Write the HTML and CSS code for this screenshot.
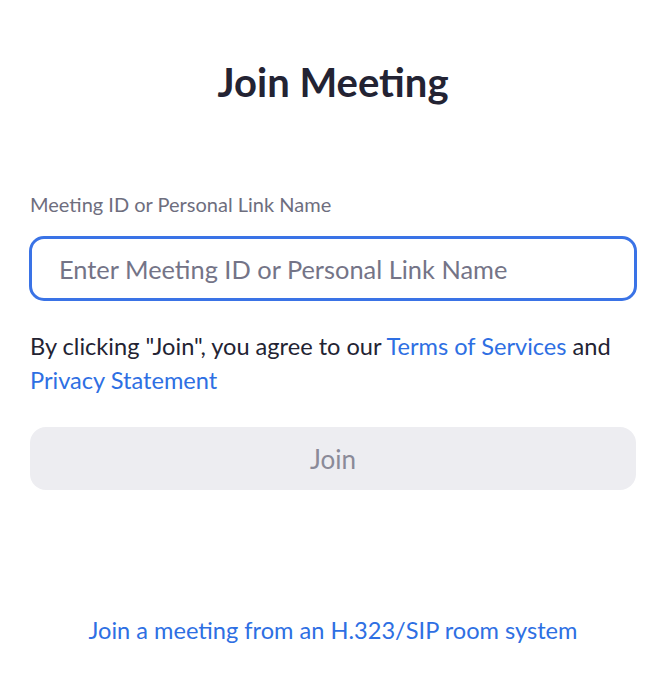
FILE: index.html
```html
<!DOCTYPE html>
<html lang="en">
<head>
  <meta charset="UTF-8" />
  <meta name="viewport" content="width=device-width, initial-scale=1.0"/>
  <title>Join Meeting</title>
  <link rel="stylesheet" href="styles.css">
</head>
<body>

  <div class="page">
    <h1 class="title">Join Meeting</h1>

    <!-- Meeting ID field -->
    <label class="field-label" for="meetingId">Meeting ID or Personal Link Name</label>
    <input type="text" id="meetingId" class="field-input" placeholder="Enter Meeting ID or Personal Link Name" />

    <p class="terms">
      By clicking "Join", you agree to our <a href="#">Terms of Services</a> and
      <a href="#">Privacy Statement</a>
    </p>

    <button class="join-btn" disabled>Join</button>

    <div class="footer">
      <a href="#">Join a meeting from an H.323/SIP room system</a>
    </div>
  </div>

</body>
</html>
```

FILE: styles.css
```css
body {
  margin: 0;
  font-family: Lato, "Noto Sans", sans-serif;
  background: #fff;
  color: #232333;
}

.page {
  margin: 0 33px 0 29px;
  display: flex;
  flex-direction: column;
}

.title {
  margin: 58px 0 0;
  font-size: 40px;
  font-weight: 700;
  line-height: 48px;
  text-align: center;
  color: #232333;
}

.field-label {
  margin-top: 86px;
  padding-left: 1px;
  font-size: 20px;
  line-height: 24px;
  color: #6e6e7e;
}

.field-input {
  margin-top: 20px;
  height: 65px;
  box-sizing: border-box;
  border: 3px solid #3a73e6;
  border-radius: 15px;
  padding: 0 27px;
  font-family: inherit;
  font-size: 25.4px;
  color: #232333;
  outline: none;
}

.field-input::placeholder {
  color: #747487;
}

.terms {
  margin: 28px 0 0 1px;
  font-size: 23.6px;
  line-height: 34px;
}

.terms a,
.footer a {
  color: #2e6fe3;
  text-decoration: none;
}

.join-btn {
  margin: 30px 1px 0;
  height: 63px;
  border: none;
  border-radius: 16px;
  background: #ededf1;
  font-family: inherit;
  font-size: 26px;
  color: #8a8a98;
}

.footer {
  margin-top: 123px;
  text-align: center;
  font-size: 23.6px;
  line-height: 34px;
}
```
